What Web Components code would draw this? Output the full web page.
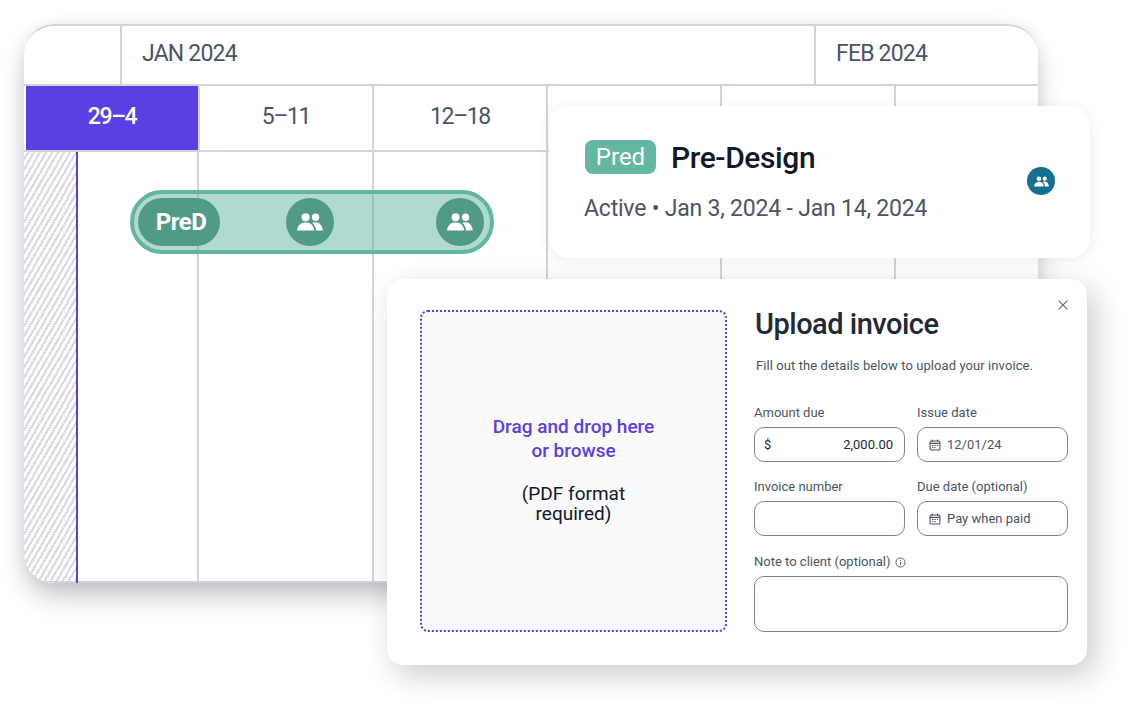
<!DOCTYPE html>
<html>
<head>
<meta charset="utf-8">
<title>Schedule</title>
<style>
html,body{margin:0;padding:0;background:#fff;}
body{width:1128px;height:706px;position:relative;overflow:hidden;font-family:Roboto,"Liberation Sans",sans-serif;}
</style>
</head>
<body>
<schedule-calendar></schedule-calendar>
<phase-card></phase-card>
<invoice-modal></invoice-modal>
<script>
const PEOPLE = `<svg viewBox="0 0 26 18" fill="currentColor">
  <circle cx="8.6" cy="4.2" r="4"></circle>
  <circle cx="18.6" cy="4.2" r="3.7"></circle>
  <path d="M0 17.6c.6-5.400 4-8 8.600-8s8 2.600 8.600 8z"></path>
  <path d="M15.200 9.800c1-.4 2.200-.6 3.400-.6 3.800 0 6.600 3 7.200 8.400h-6.600c-.4-3.200-1.600-5.800-4-7.800z"></path>
</svg>`;

const CALENDAR = `<svg viewBox="0 0 12 12" fill="none" stroke="#4b5563" stroke-width="1.100">
  <rect x="1.100" y="2" width="9.800" height="9" rx="1"></rect>
  <path d="M1.100 4.400h9.800M3.400 .6v2.200M8.600 .6v2.200"></path>
  <path d="M3 6.500h1.400M5.400 6.500h1.400M7.800 6.500h1.400M3 8.600h1.400M5.400 8.600h1.400" stroke-width="1"></path>
</svg>`;

const WeekCellTemplate = document.createElement('template');
WeekCellTemplate.innerHTML = `
<style>
:host{
  display:flex;
  align-items:center;
  justify-content:center;
  border-right:2px solid #d1d5db;
  font-size:23px;
  color:#4b5563;
  letter-spacing:-1.400px;
  padding-bottom:3px;
  box-sizing:border-box;
}
:host([current]){
  background:#5a3fe2;
  color:#fff;
  font-weight:500;
  margin-left:2px;
}
</style>
<slot></slot>
`;
class WeekCell extends HTMLElement {
  constructor() {
    super();
    this.attachShadow({ mode: 'open' });
    this.shadowRoot.appendChild(WeekCellTemplate.content.cloneNode(true));
  }
}
customElements.define('week-cell', WeekCell);

const GanttBarTemplate = document.createElement('template');
GanttBarTemplate.innerHTML = `
<style>
:host{
  position:absolute;
  left:106px;
  top:164px;
  width:364px;
  height:64px;
  box-sizing:border-box;
  display:flex;
  align-items:center;
  padding:0 4px;
  border:4px solid #62b5a0;
  border-radius:32px;
  background:rgba(98,181,160,.5);
  color:#fff;
  z-index:2;
}
.code{
  width:82px;
  height:48px;
  box-sizing:border-box;
  padding-left:4px;
  border-radius:24px;
  background:#519a85;
  display:flex;
  align-items:center;
  justify-content:center;
  font-size:24px;
  font-weight:700;
  letter-spacing:-.5px;
}
.who{
  width:48px;
  height:48px;
  border-radius:50%;
  background:#519a85;
  display:flex;
  align-items:center;
  justify-content:center;
}
.who svg{width:26px;height:18px;}
.one{margin-left:66px;}
.two{margin-left:102px;}
</style>
<div class="code">PreD</div>
<div class="who one">${PEOPLE}</div>
<div class="who two">${PEOPLE}</div>
`;
class GanttBar extends HTMLElement {
  constructor() {
    super();
    this.attachShadow({ mode: 'open' });
    this.shadowRoot.appendChild(GanttBarTemplate.content.cloneNode(true));
  }
}
customElements.define('gantt-bar', GanttBar);

const CalendarTemplate = document.createElement('template');
CalendarTemplate.innerHTML = `
<style>
:host{
  position:absolute;
  z-index:0;
  left:24px;
  top:24px;
  width:1014px;
  height:559px;
  display:block;
  box-sizing:border-box;
  background:#fff;
  border-radius:30px;
  box-shadow:0 16px 28px -4px rgba(17,24,39,.26),0 0 16px rgba(17,24,39,.07);
  overflow:hidden;
}
.wrap{
  height:100%;
  box-sizing:border-box;
  border-top:2px solid #d1d5db;
  display:grid;
  grid-template-rows:58px 2px 64px 2px 1fr 2px;
  position:relative;
  border-radius:30px;
  overflow:hidden;
}
.months{
  display:grid;
  grid-template-columns:98px 694px 1fr;
  font-size:23px;
  color:#4b5563;
  letter-spacing:-.8px;
}
.months div{
  display:flex;
  align-items:center;
  padding:0 0 3px 20px;
  box-sizing:border-box;
  border-right:2px solid #d1d5db;
}
.months div:last-child{border-right:0;}
.rule{background:#d1d5db;}
.weeks{
  display:grid;
  grid-template-columns:176px repeat(4,174px) 1fr;
}
.body{
  display:grid;
  grid-template-columns:175px 175px repeat(3,174px) 1fr;
  position:relative;
  z-index:1;
}
.weeks week-cell:last-child,.body div:last-child{border-right:0;}
.body div{border-right:2px solid #d1d5db;}
.body .first{
  display:grid;
  grid-template-columns:52px 2px 1fr;
}
.body .first i{display:block;}
.hatch{
  background:repeating-linear-gradient(-60deg,#d8dbe2 0,#d8dbe2 2.200px,#fff 2.200px,#fff 5.200px);
}
.body .first .now{background:#5a3fe2;margin-bottom:-3px;}
</style>
<div class="wrap">
  <div class="months"><div></div><div>JAN 2024</div><div>FEB 2024</div></div>
  <div class="rule"></div>
  <div class="weeks">
    <week-cell current>29–4</week-cell>
    <week-cell>5–11</week-cell>
    <week-cell>12–18</week-cell>
    <week-cell></week-cell>
    <week-cell></week-cell>
    <week-cell></week-cell>
  </div>
  <div class="rule"></div>
  <div class="body">
    <div class="first"><i class="hatch"></i><i class="now"></i><i></i></div>
    <div></div><div></div><div></div><div></div><div></div>
  </div>
  <div class="rule"></div>
  <gantt-bar></gantt-bar>
</div>
`;
class ScheduleCalendar extends HTMLElement {
  constructor() {
    super();
    this.attachShadow({ mode: 'open' });
    this.shadowRoot.appendChild(CalendarTemplate.content.cloneNode(true));
  }
}
customElements.define('schedule-calendar', ScheduleCalendar);

const PhaseCardTemplate = document.createElement('template');
PhaseCardTemplate.innerHTML = `
<style>
:host{
  position:absolute;
  z-index:1;
  left:549px;
  top:106px;
  width:541px;
  height:152px;
  box-sizing:border-box;
  display:flex;
  align-items:center;
  justify-content:space-between;
  padding:0 35px 3px 36px;
  background:#fff;
  border-radius:20px;
  box-shadow:0 2px 14px rgba(17,24,39,.08);
}
.top{display:flex;align-items:center;gap:15px;}
.badge{
  width:71px;
  height:34px;
  border-radius:8px;
  background:#64b7a1;
  color:#fff;
  font-size:24px;
  display:flex;
  align-items:center;
  justify-content:center;
}
.title{font-size:30px;font-weight:500;color:#111827;letter-spacing:-.4px;}
.sub{font-size:23px;color:#4b5563;margin-top:20px;margin-left:-1px;letter-spacing:-.2px;}
.who{
  width:28px;
  height:28px;
  border-radius:50%;
  background:#14708f;
  color:#fff;
  display:flex;
  align-items:center;
  justify-content:center;
  margin-top:1px;
}
.who svg{width:15px;height:11px;}
</style>
<div>
  <div class="top"><span class="badge">Pred</span><span class="title">Pre-Design</span></div>
  <div class="sub">Active • Jan 3, 2024 - Jan 14, 2024</div>
</div>
<div class="who">${PEOPLE}</div>
`;
class PhaseCard extends HTMLElement {
  constructor() {
    super();
    this.attachShadow({ mode: 'open' });
    this.shadowRoot.appendChild(PhaseCardTemplate.content.cloneNode(true));
  }
}
customElements.define('phase-card', PhaseCard);

const FormFieldTemplate = document.createElement('template');
FormFieldTemplate.innerHTML = `
<style>
:host{display:block;font-size:13px;color:#4b5563;}
.label{
  height:16px;
  line-height:16px;
  margin-bottom:6px;
  display:flex;
  align-items:center;
  gap:5px;
}
.box{
  box-sizing:border-box;
  height:var(--box-height,35px);
  border:1px solid #7b8494;
  border-radius:10px;
  display:flex;
  align-items:center;
  justify-content:space-between;
  padding:0 11px;
}
</style>
<div class="label"><span class="text"></span><slot name="hint"></slot></div>
<div class="box"><slot></slot></div>
`;
class FormField extends HTMLElement {
  constructor() {
    super();
    this.attachShadow({ mode: 'open' });
    this.shadowRoot.appendChild(FormFieldTemplate.content.cloneNode(true));
    this.shadowRoot.querySelector('.text').innerText = this.getAttribute('label');
  }
}
customElements.define('form-field', FormField);

const DateValueTemplate = document.createElement('template');
DateValueTemplate.innerHTML = `
<style>
:host{display:flex;align-items:center;gap:6px;color:#4b5563;font-size:13px;}
svg{width:12px;height:12px;}
</style>
${CALENDAR}<slot></slot>
`;
class DateValue extends HTMLElement {
  constructor() {
    super();
    this.attachShadow({ mode: 'open' });
    this.shadowRoot.appendChild(DateValueTemplate.content.cloneNode(true));
  }
}
customElements.define('date-value', DateValue);

const InvoiceModalTemplate = document.createElement('template');
InvoiceModalTemplate.innerHTML = `
<style>
:host{
  position:absolute;
  z-index:2;
  left:387px;
  top:279px;
  width:700px;
  height:386px;
  box-sizing:border-box;
  display:grid;
  grid-template-columns:307px 314px;
  column-gap:27px;
  padding:31px 0 33px 33px;
  background:#fff;
  border-radius:16px;
  box-shadow:8px 10px 30px rgba(17,24,39,.22);
}
.drop{
  box-sizing:border-box;
  border:2px dotted #5a3fe2;
  border-radius:8px;
  background:#f9fafb;
  display:flex;
  flex-direction:column;
  align-items:center;
  justify-content:center;
  text-align:center;
  font-size:19px;
  padding-bottom:3px;
}
.link{color:#5a3fe2;font-weight:500;line-height:24px;}
.req{color:#111827;line-height:20px;margin-top:21px;width:120px;}
.form{display:flex;flex-direction:column;min-width:0;}
h2{
  margin:-3px 0 0 1px;
  font-size:29px;
  line-height:34px;
  font-weight:500;
  letter-spacing:-.5px;
  color:#1f2937;
}
p{
  margin:17px 0 0 2px;
  font-size:13px;
  line-height:16px;
  letter-spacing:.08px;
  color:#4b5563;
}
.grid{
  display:grid;
  grid-template-columns:151px 151px;
  column-gap:12px;
  row-gap:17px;
  margin-top:31px;
}
.wide{grid-column:1 / 3;--box-height:56px;margin-top:1px;}
.hint{width:11px;height:11px;}
.value{color:#1f2937;}
.dollar{margin-left:-2px;}
.close{
  position:absolute;
  top:21px;
  right:19px;
  width:10px;
  height:10px;
}
</style>
<div class="drop">
  <div class="link">Drag and drop here<br>or browse</div>
  <div class="req">(PDF format required)</div>
</div>
<div class="form">
  <h2>Upload invoice</h2>
  <p>Fill out the details below to upload your invoice.</p>
  <div class="grid">
    <form-field label="Amount due"><span class="value dollar">$</span><span class="value">2,000.00</span></form-field>
    <form-field label="Issue date"><date-value>12/01/24</date-value></form-field>
    <form-field label="Invoice number"></form-field>
    <form-field label="Due date (optional)"><date-value>Pay when paid</date-value></form-field>
    <form-field class="wide" label="Note to client (optional)">
      <svg slot="hint" class="hint" viewBox="0 0 12 12" fill="none" stroke="#4b5563" stroke-width="1">
        <circle cx="6" cy="6" r="5"></circle>
        <path d="M6 5.400v3M6 3.200v1.100"></path>
      </svg>
    </form-field>
  </div>
</div>
<svg class="close" viewBox="0 0 10 10" fill="none" stroke="#6b7280" stroke-width="1.300">
  <path d="M.6 .6l8.800 8.800M9.400 .6L.6 9.400"></path>
</svg>
`;
class InvoiceModal extends HTMLElement {
  constructor() {
    super();
    this.attachShadow({ mode: 'open' });
    this.shadowRoot.appendChild(InvoiceModalTemplate.content.cloneNode(true));
  }
}
customElements.define('invoice-modal', InvoiceModal);
</script>
</body>
</html>
